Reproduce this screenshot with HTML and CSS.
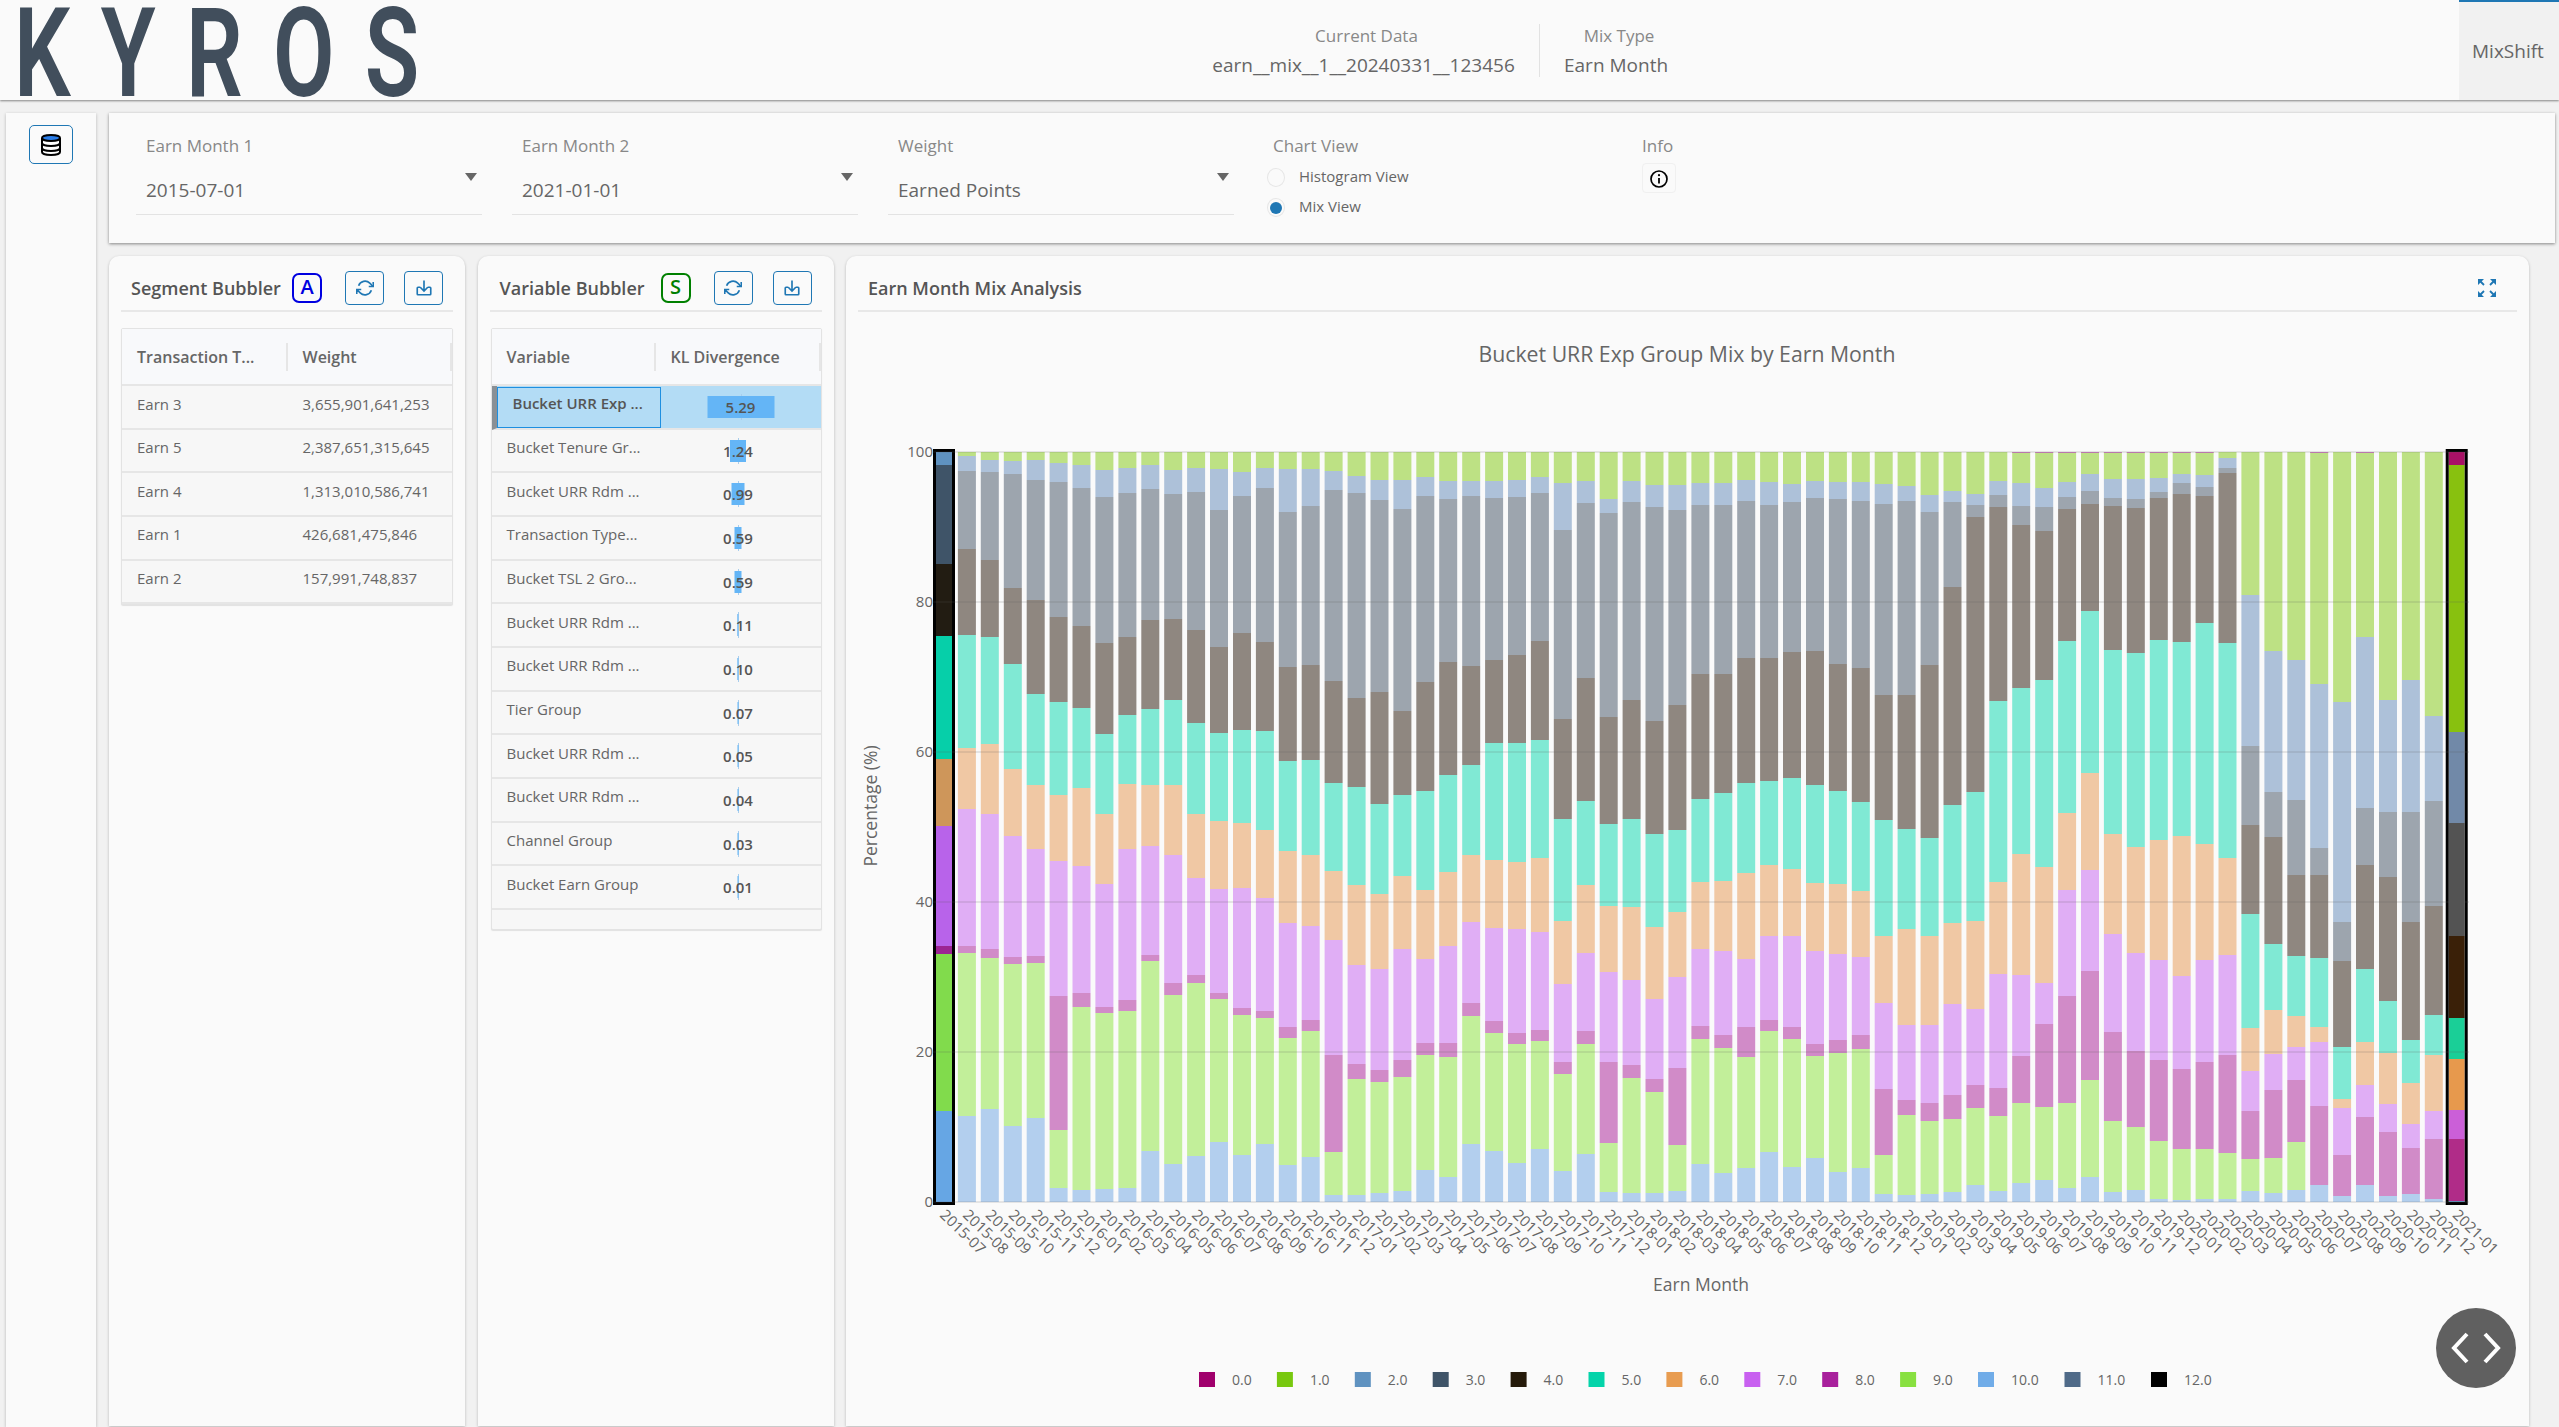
FILE: index.html
```html
<!DOCTYPE html>
<html lang="en">

<head>
    <meta charset="UTF-8">
    <title>Kyros MixShift</title>
    <link rel="stylesheet" href="styles.css">
</head>

<body>
    <header class="topbar">
        <div class="logo"><span class="logo-text">KYROS</span></div>
        <div class="info-block info-data">
            <div class="info-label">Current Data</div>
            <div class="info-value">earn__mix__1__20240331__123456</div>
        </div>
        <div class="info-block info-type">
            <div class="info-label">Mix Type</div>
            <div class="info-value">Earn Month</div>
        </div>
        <div class="tab">MixShift</div>
    </header>

    <div class="page">
        <aside class="rail">
            <button class="rail-btn">
                <svg width="22" height="22" viewBox="0 0 22 22">
                    <path d="M2 4v14c0 1.8 4 3 9 3s9-1.200 9-3V4" fill="#fff" stroke="#000" stroke-width="2" />
                    <path d="M2 9c0 1.800 4 3 9 3s9-1.200 9-3M2 14c0 1.800 4 3 9 3s9-1.200 9-3" fill="none" stroke="#000" stroke-width="2" />
                    <ellipse cx="11" cy="4" rx="9" ry="3" fill="#2a7de8" stroke="#000" stroke-width="2" />
                </svg>
            </button>
        </aside>

        <main class="content">
            <section class="filters">
                <div class="field">
                    <label class="field-label">Earn Month 1</label>
                    <div class="field-value">2015-07-01</div>
                    <span class="caret"></span>
                </div>
                <div class="field">
                    <label class="field-label">Earn Month 2</label>
                    <div class="field-value">2021-01-01</div>
                    <span class="caret"></span>
                </div>
                <div class="field">
                    <label class="field-label">Weight</label>
                    <div class="field-value">Earned Points</div>
                    <span class="caret"></span>
                </div>
                <div class="view-group">
                    <div class="field-label">Chart View</div>
                    <div class="radio-row"><span class="radio"></span>Histogram View</div>
                    <div class="radio-row"><span class="radio radio-on"></span>Mix View</div>
                </div>
                <div class="info-group">
                    <div class="info-title">Info</div>
                    <button class="info-btn">
                        <svg width="20" height="20" viewBox="0 0 20 20">
                            <circle cx="10" cy="10" r="8" fill="none" stroke="#000" stroke-width="1.700" />
                            <path d="M10 9v5.500" stroke="#000" stroke-width="1.800" />
                            <circle cx="10" cy="6.200" r="1.100" />
                        </svg>
                    </button>
                </div>
            </section>

            <section class="cards">
                <div class="card">
                    <div class="card-head">
                        <h2 class="card-title">Segment Bubbler</h2>
                        <span class="badge badge-a">A</span>
                        <button class="icon-btn">
                            <svg class="btn-icon" viewBox="0 0 24 24"><path d="M23 4v6h-6M1 20v-6h6M3.500 9a9 9 0 0 1 14.900-3.400L23 10M1 14l4.600 4.400A9 9 0 0 0 20.500 15" /></svg>
                        </button>
                        <button class="icon-btn">
                            <svg class="btn-icon" viewBox="0 0 24 24"><path d="M7 11H4a1 1 0 0 0-1 1v8a1 1 0 0 0 1 1h16a1 1 0 0 0 1-1v-8a1 1 0 0 0-1-1h-3M12 2v13M7 11l5 5 5-5" /></svg>
                        </button>
                    </div>
                    <div class="table">
                        <div class="table-head">
                            <div class="head-cell">Transaction T...</div>
                            <div class="head-cell">Weight</div>
                        </div>
                        <div class="table-row"><div class="cell">Earn 3</div><div class="cell">3,655,901,641,253</div></div>
                        <div class="table-row"><div class="cell">Earn 5</div><div class="cell">2,387,651,315,645</div></div>
                        <div class="table-row"><div class="cell">Earn 4</div><div class="cell">1,313,010,586,741</div></div>
                        <div class="table-row"><div class="cell">Earn 1</div><div class="cell">426,681,475,846</div></div>
                        <div class="table-row"><div class="cell">Earn 2</div><div class="cell">157,991,748,837</div></div>
                    </div>
                </div>

                <div class="card">
                    <div class="card-head">
                        <h2 class="card-title">Variable Bubbler</h2>
                        <span class="badge badge-s">S</span>
                        <button class="icon-btn">
                            <svg class="btn-icon" viewBox="0 0 24 24"><path d="M23 4v6h-6M1 20v-6h6M3.500 9a9 9 0 0 1 14.900-3.400L23 10M1 14l4.600 4.400A9 9 0 0 0 20.500 15" /></svg>
                        </button>
                        <button class="icon-btn">
                            <svg class="btn-icon" viewBox="0 0 24 24"><path d="M7 11H4a1 1 0 0 0-1 1v8a1 1 0 0 0 1 1h16a1 1 0 0 0 1-1v-8a1 1 0 0 0-1-1h-3M12 2v13M7 11l5 5 5-5" /></svg>
                        </button>
                    </div>
                    <div class="table table-kl">
                        <div class="table-head">
                            <div class="head-cell">Variable</div>
                            <div class="head-cell">KL Divergence</div>
                        </div>
                        <div class="table-row row-selected"><div class="cell name-cell">Bucket URR Exp ...</div><div class="cell kl-cell"><span class="kl-bar" style="width:67px"></span><span class="kl-num">5.29</span></div></div>
                        <div class="table-row"><div class="cell name-cell">Bucket Tenure Gr...</div><div class="cell kl-cell"><span class="kl-bar" style="width:16px"></span><span class="kl-num">1.24</span></div></div>
                        <div class="table-row"><div class="cell name-cell">Bucket URR Rdm ...</div><div class="cell kl-cell"><span class="kl-bar" style="width:13px"></span><span class="kl-num">0.99</span></div></div>
                        <div class="table-row"><div class="cell name-cell">Transaction Type...</div><div class="cell kl-cell"><span class="kl-bar" style="width:7px"></span><span class="kl-num">0.59</span></div></div>
                        <div class="table-row"><div class="cell name-cell">Bucket TSL 2 Gro...</div><div class="cell kl-cell"><span class="kl-bar" style="width:7px"></span><span class="kl-num">0.59</span></div></div>
                        <div class="table-row"><div class="cell name-cell">Bucket URR Rdm ...</div><div class="cell kl-cell"><span class="kl-bar" style="width:1.400px"></span><span class="kl-num">0.11</span></div></div>
                        <div class="table-row"><div class="cell name-cell">Bucket URR Rdm ...</div><div class="cell kl-cell"><span class="kl-bar" style="width:1.300px"></span><span class="kl-num">0.10</span></div></div>
                        <div class="table-row"><div class="cell name-cell">Tier Group</div><div class="cell kl-cell"><span class="kl-bar" style="width:1px"></span><span class="kl-num">0.07</span></div></div>
                        <div class="table-row"><div class="cell name-cell">Bucket URR Rdm ...</div><div class="cell kl-cell"><span class="kl-bar" style="width:1px"></span><span class="kl-num">0.05</span></div></div>
                        <div class="table-row"><div class="cell name-cell">Bucket URR Rdm ...</div><div class="cell kl-cell"><span class="kl-bar" style="width:1px"></span><span class="kl-num">0.04</span></div></div>
                        <div class="table-row"><div class="cell name-cell">Channel Group</div><div class="cell kl-cell"><span class="kl-bar" style="width:1px"></span><span class="kl-num">0.03</span></div></div>
                        <div class="table-row"><div class="cell name-cell">Bucket Earn Group</div><div class="cell kl-cell"><span class="kl-bar" style="width:1px"></span><span class="kl-num">0.01</span></div></div>
                        <div class="table-filler"></div>
                    </div>
                </div>

                <div class="card card-chart">
                    <div class="card-head">
                        <h2 class="chart-heading">Earn Month Mix Analysis</h2>
                        <svg class="expand-icon" width="20" height="20" viewBox="0 0 20 20">
                            <path d="M1 1h6L1 7zM19 1h-6l6 6zM1 19h6l-6-6zM19 19h-6l6-6z" fill="#1f77b4" />
                            <path d="M3 3l4 4M17 3l-4 4M3 17l4-4M17 17l-4-4" stroke="#1f77b4" stroke-width="1.800" />
                        </svg>
                    </div>
                    <svg id="mixChart" class="mix-chart" width="1683" height="1114" viewBox="0 0 1683 1114"></svg>
                </div>
            </section>
        </main>
    </div>

    <button class="fab">
        <svg width="52" height="32" viewBox="0 0 52 32">
            <path d="M17 2L4 16l13 14M35 2l13 14-13 14" fill="none" stroke="#fff" stroke-width="4" />
        </svg>
    </button>

    <script src="chart.js"></script>
</body>

</html>
```

FILE: styles.css
```css
* {
    margin: 0;
    padding: 0;
    box-sizing: border-box;
}

body {
    width: 2559px;
    height: 1427px;
    overflow: hidden;
    font-family: "Open Sans", "Liberation Sans", sans-serif;
    background-color: #f1f1f1;
    color: #666;
}

button {
    font-family: inherit;
    background: none;
    cursor: pointer;
}

/* top bar */
.topbar {
    display: flex;
    height: 100px;
    background-color: #fafafa;
    box-shadow: 0 1px 2px rgba(0, 0, 0, 0.45);
}

.logo {
    width: 1214px;
    padding: 4px 0 0 14px;
}

.logo-text {
    display: block;
    width: 760px;
    font-family: Roboto, sans-serif;
    font-size: 124px;
    font-weight: 600;
    line-height: 100px;
    letter-spacing: 42px;
    color: #414e5c;
    transform: scaleX(0.72);
    transform-origin: left center;
}

.info-block {
    display: flex;
    flex-direction: column;
    align-items: center;
    margin-top: 24px;
    height: 53px;
}

.info-data {
    width: 326px;
    padding-right: 26px;
    border-right: 1px solid #e2e2e2;
}

.info-type {
    padding-left: 24px;
}

.info-label {
    padding-left: 6px;
    font-size: 17px;
    line-height: 24px;
    color: #888;
}

.info-value {
    margin-top: 4px;
    font-size: 19px;
    line-height: 26px;
    color: #666;
}

.tab {
    width: 100px;
    margin-left: auto;
    padding: 36px 0 0 13px;
    border-top: 2px solid #1f77b4;
    background-color: #f1f1f1;
    font-size: 19px;
    line-height: 26px;
}

/* page body */
.page {
    display: flex;
    height: 1327px;
    padding-top: 13px;
}

.rail {
    flex-shrink: 0;
    width: 90px;
    margin-left: 6px;
    padding: 12px 0 0 23px;
    background-color: #fafafa;
    box-shadow: 0 1px 3px rgba(0, 0, 0, 0.25);
}

.rail-btn {
    display: flex;
    align-items: center;
    justify-content: center;
    width: 44px;
    height: 39px;
    border: 1px solid #1f77b4;
    border-radius: 5px;
    background-color: #fafafa;
}

.content {
    display: flex;
    flex-direction: column;
    flex: 1;
    min-width: 0;
    margin-left: 13px;
    padding-right: 4px;
    row-gap: 13px;
}

/* filters */
.filters {
    display: flex;
    height: 130px;
    padding: 22px 0 0 27px;
    background-color: #fafafa;
    box-shadow: 0 1px 3px rgba(0, 0, 0, 0.45);
}

.field {
    position: relative;
    width: 346px;
    height: 80px;
    margin-right: 30px;
    padding-left: 10px;
    border-bottom: 1px solid #e3e3e3;
}

.field-label,
.info-title {
    display: block;
    font-size: 17px;
    line-height: 22px;
    color: #888;
}

.field-value {
    margin-top: 20px;
    font-size: 19px;
    line-height: 26px;
    color: #666;
}

.caret {
    position: absolute;
    top: 38px;
    right: 5px;
    border-top: 8px solid #666;
    border-left: 6px solid transparent;
    border-right: 6px solid transparent;
}

.view-group {
    width: 375px;
    margin-left: 3px;
}

.view-group .field-label {
    padding-left: 6px;
}

.radio-row {
    display: flex;
    align-items: center;
    column-gap: 14px;
    height: 19px;
    margin-top: 10px;
    font-size: 15px;
    line-height: 17px;
    color: #666;
}

.radio-row + .radio-row {
    margin-top: 11px;
}

.radio {
    display: flex;
    align-items: center;
    justify-content: center;
    width: 18px;
    height: 19px;
    margin-top: 2px;
    border: 1px solid #e6e6e6;
    border-radius: 50%;
    background-color: #fafafa;
}

.radio-on::after {
    content: "";
    width: 12px;
    height: 12px;
    border-radius: 50%;
    background-color: #1f77b4;
}

.info-btn {
    display: flex;
    align-items: center;
    justify-content: center;
    width: 34px;
    height: 30px;
    margin-top: 6px;
    padding-top: 2px;
    border: 1px solid #f0f0f0;
    border-radius: 4px;
}

/* cards */
.cards {
    display: grid;
    grid-template-columns: 356px 356px 1fr;
    column-gap: 12.500px;
    height: 1170px;
    margin-right: 26px;
}

.card {
    min-width: 0;
    border-radius: 10px 10px 0 0;
    background-color: #fafafa;
    box-shadow: 0 1px 3px rgba(0, 0, 0, 0.25);
}

.card-head {
    display: flex;
    align-items: center;
    height: 56px;
    margin: 0 12px;
    padding: 9px 0 0 10px;
    border-bottom: 2px solid #e8e8e8;
}

.card-title {
    width: 161px;
    font-size: 18px;
    font-weight: 600;
    color: #555;
    white-space: nowrap;
}

.chart-heading {
    flex: 1;
    font-size: 18px;
    font-weight: 600;
    color: #555;
}

.expand-icon {
    margin-right: 20px;
}

.badge {
    width: 30px;
    height: 30px;
    border: 2.500px solid;
    border-radius: 7px;
    font-size: 20px;
    font-weight: 600;
    line-height: 24px;
    text-align: center;
}

.badge-a {
    color: #0000e0;
}

.badge-s {
    color: #008000;
}

.icon-btn {
    display: flex;
    align-items: center;
    justify-content: center;
    width: 39px;
    height: 34px;
    margin-left: 23px;
    border: 1px solid #1f77b4;
    border-radius: 4px;
}

.icon-btn + .icon-btn {
    margin-left: 20px;
}

.btn-icon {
    width: 18px;
    height: 18px;
    fill: none;
    stroke: #1f77b4;
    stroke-width: 2.200;
}

/* tables */
.table {
    margin: 16px 12px 0;
    border: 1px solid #e3e3e3;
    border-radius: 2px;
    background-color: #f7f7f7;
    box-shadow: 0 1px 1px rgba(0, 0, 0, 0.1);
}

.table-kl {
    margin-left: 13px;
}

.table-head {
    display: grid;
    grid-template-columns: 165.500px 1fr;
    align-items: center;
    height: 57px;
    border-bottom: 2px solid #e6e6e6;
    background-color: #f8f9fb;
}

.head-cell {
    display: flex;
    align-items: center;
    height: 28px;
    padding-left: 15px;
    border-right: 2px solid #e6e6e6;
    font-size: 16px;
    font-weight: 600;
    color: #666;
}

.table-row {
    display: grid;
    grid-template-columns: 165.500px 1fr;
    height: 43.670px;
    border-bottom: 2px solid #e6e6e6;
}

.table-kl .table-head,
.table-kl .table-row {
    grid-template-columns: 164px 1fr;
}

.cell {
    padding: 6.500px 0 0 15px;
    font-size: 15px;
    line-height: 22px;
    color: #666;
    white-space: nowrap;
}

.kl-cell {
    position: relative;
    display: flex;
    align-items: center;
    justify-content: center;
    height: 42px;
    padding: 0;
}

.kl-cell::before {
    content: "";
    position: absolute;
    top: 8px;
    left: 50%;
    width: 1px;
    height: 26px;
    background-color: #a9cdec;
}

.kl-bar {
    position: absolute;
    top: 10px;
    left: 50%;
    height: 22px;
    background-color: #64b5f6;
    transform: translateX(-50%);
}

.kl-num {
    position: relative;
    font-weight: 600;
    color: #555;
}

.row-selected {
    border-left: 5px solid #8a9095;
    background-color: #b3dcf5;
}

.row-selected .name-cell {
    height: 41px;
    border: 1px solid #1e8fe0;
    font-weight: 600;
    color: #555;
    margin-top: 1px;
    padding-top: 4px;
}

.table-filler {
    height: 19px;
}

/* chart */
.mix-chart {
    display: block;
}

.chart-title {
    font-size: 21.250px;
    fill: #666;
    text-anchor: middle;
}

.axis-label {
    font-size: 17.500px;
    fill: #666;
    text-anchor: middle;
}

.tick-label {
    font-size: 15px;
    fill: #666;
}

.tick-y {
    text-anchor: end;
}

.legend-label {
    font-size: 14px;
    fill: #666;
}

.fab {
    position: fixed;
    left: 2436px;
    top: 1308px;
    display: flex;
    align-items: center;
    justify-content: center;
    width: 80px;
    height: 80px;
    border: none;
    border-radius: 50%;
    background-color: #606060;
}
```

FILE: chart.js
```js
// cumulative stack tops for each month, in chart pixels (750 = 100%)
// each value is where one segment ends, going down from the top of the bar
var rows = [
    [749, 737, 638, 566, 443, 376, 256, 248, 91],
    [746, 731, 653, 567, 454, 393, 256, 249, 86],
    [742, 730, 642, 565, 458, 388, 253, 244, 93],
    [741, 728, 614, 538, 433, 366, 245, 238, 76],
    [742, 722, 602, 508, 417, 353, 246, 239, 84],
    [739, 720, 585, 500, 407, 341, 206, 72, 14],
    [737, 714, 576, 494, 414, 336, 209, 195, 12],
    [732, 705, 559, 468, 388, 318, 195, 189, 13],
    [734, 709, 565, 487, 418, 353, 202, 191, 14],
    [737, 713, 582, 493, 417, 356, 247, 241, 51],
    [732, 708, 583, 502, 417, 347, 219, 207, 38],
    [734, 710, 572, 479, 388, 324, 227, 219, 46],
    [733, 692, 555, 469, 381, 313, 209, 203, 60],
    [730, 706, 569, 472, 379, 314, 194, 187, 47],
    [734, 714, 560, 471, 372, 304, 191, 184, 58],
    [733, 690, 535, 441, 351, 279, 175, 164, 37],
    [733, 696, 537, 442, 347, 276, 182, 171, 45],
    [731, 712, 521, 419, 331, 262, 147, 50, 7],
    [726, 709, 504, 415, 317, 237, 138, 123, 7],
    [722, 702, 510, 398, 308, 233, 132, 120, 9],
    [722, 693, 491, 407, 326, 253, 142, 125, 11],
    [725, 706, 520, 411, 312, 243, 159, 147, 32],
    [721, 703, 540, 427, 330, 256, 159, 145, 25],
    [721, 706, 536, 437, 347, 280, 199, 186, 58],
    [721, 704, 542, 459, 342, 274, 181, 169, 51],
    [722, 705, 547, 459, 340, 273, 169, 158, 39],
    [725, 709, 561, 462, 344, 270, 172, 161, 53],
    [719, 672, 483, 383, 281, 218, 140, 128, 31],
    [721, 699, 524, 401, 317, 249, 171, 158, 48],
    [703, 689, 485, 378, 296, 230, 140, 59, 10],
    [721, 700, 502, 383, 295, 222, 137, 124, 9],
    [717, 695, 481, 368, 275, 203, 123, 110, 9],
    [717, 692, 497, 372, 290, 225, 134, 57, 11],
    [719, 697, 528, 403, 320, 253, 176, 163, 38],
    [719, 697, 528, 409, 321, 251, 167, 154, 29],
    [722, 701, 544, 419, 329, 243, 175, 145, 34],
    [720, 697, 544, 421, 337, 266, 182, 171, 50],
    [718, 700, 550, 424, 333, 266, 175, 163, 35],
    [721, 704, 551, 417, 319, 251, 158, 146, 44],
    [720, 703, 538, 411, 318, 248, 162, 149, 30],
    [720, 701, 534, 400, 311, 245, 167, 153, 34],
    [718, 698, 507, 382, 266, 199, 113, 47, 8],
    [716, 701, 507, 373, 273, 177, 102, 87, 7],
    [707, 690, 537, 364, 266, 177, 99, 81, 8],
    [711, 700, 615, 397, 279, 198, 107, 83, 10],
    [708, 697, 685, 410, 281, 193, 117, 94, 17],
    [721, 707, 695, 501, 320, 228, 114, 86, 11],
    [719, 696, 677, 514, 348, 227, 146, 99, 19],
    [714, 695, 671, 522, 335, 219, 178, 95, 22],
    [720, 705, 693, 561, 389, 312, 206, 99, 14],
    [728, 711, 698, 591, 429, 332, 231, 122, 25],
    [723, 704, 696, 552, 368, 268, 170, 81, 10],
    [723, 703, 694, 549, 355, 249, 151, 75, 12],
    [724, 710, 704, 562, 362, 242, 142, 61, 3],
    [728, 719, 708, 560, 366, 226, 133, 53, 2],
    [727, 715, 706, 579, 358, 242, 140, 53, 3],
    [744, 734, 729, 559, 344, 247, 147, 49, 3],
    [607, 456, 377, 288, 174, 131, 91, 43, 11],
    [551, 410, 365, 258, 192, 148, 112, 44, 9],
    [542, 402, 327, 246, 186, 155, 122, 60, 12],
    [518, 354, 327, 244, 175, 160, 96, 17, 17],
    [500, 280, 241, 155, 103, 94, 47, 6, 6],
    [565, 394, 337, 233, 160, 117, 85, 17, 17],
    [502, 390, 325, 201, 149, 98, 70, 6, 6],
    [522, 390, 280, 162, 119, 78, 54, 8, 8],
    [486, 401, 296, 187, 147, 91, 63, 3, 3],
    [737, 470, 379, 266, 184, 143, 92, 63, 1]
];

// months with a sliver of 0.0 on top
var thinTop = [47, 48, 49, 50, 51, 52, 53, 54, 55, 60, 62];

var paleColors = ['#bde184', '#adc1d9', '#9da5ae', '#8f8780', '#80e9d4', '#f0c8a4', '#e0aef5', '#d18bc8', '#c2ef9a', '#b3cfee'];
var firstColors = ['#5f92c0', '#5f92c0', '#3f5468', '#221c12', '#06cfa9', '#ce965a', '#b863ea', '#9c2493', '#81db4c', '#66a6e4'];
var lastColors = ['#a81166', '#88c10f', '#7189a8', '#535353', '#3a2008', '#1acf97', '#e7994d', '#cb5fd8', '#b02c88', '#5f92c0'];

var legend = [
    ['0.0', '#a0006c'], ['1.0', '#78c80f'], ['2.0', '#5f92c0'], ['3.0', '#3f5468'], ['4.0', '#251a0a'],
    ['5.0', '#04d4aa'], ['6.0', '#e89c50'], ['7.0', '#c860f0'], ['8.0', '#a8209c'], ['9.0', '#88e040'],
    ['10.0', '#70ace8'], ['11.0', '#4f6a88'], ['12.0', '#000000']
];

var baseY = 890;
var plotLeft = 87;
var plotRight = 1623;
var step = 22.92;
var firstX = 98;
var barWidth = 18;

function rect(x, y, w, h, fill) {
    return '<rect x="' + x.toFixed(1) + '" y="' + y.toFixed(1) + '" width="' + w + '" height="' + h + '" fill="' + fill + '" />';
}

function monthLabel(i) {
    var total = 2015 * 12 + 6 + i;
    var month = total % 12 + 1;
    return Math.floor(total / 12) + '-' + (month < 10 ? '0' : '') + month;
}

function drawBar(row, i) {
    var cx = firstX + step * i;
    var colors = paleColors;
    var width = barWidth;
    var out = '';
    var highlighted = i === 0 || i === rows.length - 1;
    if (i === 0) colors = firstColors;
    if (i === rows.length - 1) colors = lastColors;
    if (highlighted) width = 16;
    var x = cx - width / 2;

    var top = 750;
    for (var s = 0; s <= row.length; s++) {
        var next = s < row.length ? row[s] : 0;
        if (top > next) out += rect(x, baseY - top, width, top - next, colors[s]);
        top = next;
    }
    if (thinTop.indexOf(i) !== -1) out += rect(x, baseY - 750, width, 1, '#c97cba');
    if (highlighted) {
        out += '<rect x="' + (x - 1.5) + '" y="' + (baseY - 751.5) + '" width="' + (width + 3) + '" height="753" fill="none" stroke="#000" stroke-width="3" />';
    }
    return out;
}

function drawChart() {
    var html = '';
    var i;

    html += '<text class="chart-title" x="841" y="50">Bucket URR Exp Group Mix by Earn Month</text>';

    for (i = 0; i < rows.length; i++) {
        html += drawBar(rows[i], i);
    }

    // grid lines sit over the bars
    for (i = 0; i <= 5; i++) {
        var y = baseY - i * 150;
        html += '<line x1="' + plotLeft + '" x2="' + plotRight + '" y1="' + y + '" y2="' + y + '" stroke="rgba(90,90,90,0.18)" stroke-width="1.500" />';
        html += '<text class="tick-label tick-y" x="' + plotLeft + '" y="' + (y + 5) + '">' + i * 20 + '</text>';
    }

    for (i = 0; i < rows.length; i++) {
        var lx = firstX + step * i - 5;
        html += '<text class="tick-label" x="' + lx.toFixed(1) + '" y="904" transform="rotate(44 ' + lx.toFixed(1) + ' 904)">' + monthLabel(i) + '</text>';
    }

    html += '<text class="axis-label" x="0" y="0" transform="translate(31 494) rotate(-90)">Percentage (%)</text>';
    html += '<text class="axis-label" x="855" y="979">Earn Month</text>';

    var lx2 = 353;
    for (i = 0; i < legend.length; i++) {
        html += rect(lx2, 1060, 16, 15, legend[i][1]);
        html += '<text class="legend-label" x="' + (lx2 + 33) + '" y="1073">' + legend[i][0] + '</text>';
        lx2 += i < 10 ? 77.900 : 86.500;
    }

    document.getElementById('mixChart').innerHTML = html;
}

drawChart();
```
